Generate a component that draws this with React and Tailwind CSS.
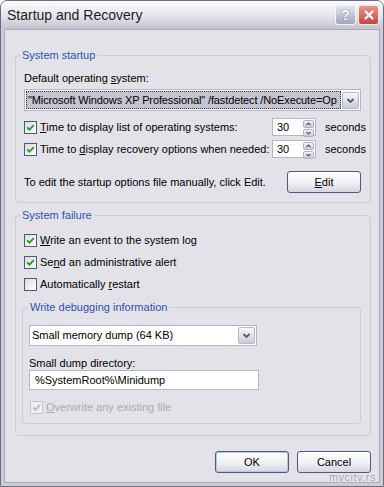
import React from 'react'

const CheckMark = ({ disabled }) => (
  <svg viewBox="0 0 11 11" className="h-[11px] w-[11px]">
    <path d="M2.2 5.4l2.3 2.3 4.3-4.6" fill="none" stroke={disabled ? '#b9b9c4' : '#21a121'} strokeWidth="1.9" />
  </svg>
)

const CheckBox = ({ checked, disabled }) => (
  <span
    className={`flex h-[13px] w-[13px] shrink-0 items-center justify-center border ${
      disabled ? 'border-[#c6c6ce] bg-[#efeff2]' : 'border-[#4b5b7c] bg-linear-to-br from-[#dcdcd7] to-white'
    }`}
  >
    {checked && <CheckMark disabled={disabled} />}
  </span>
)

const Chevron = ({ up, className = '' }) => (
  <svg viewBox="0 0 9 9" className={className}>
    <path d={up ? 'M1.5 6L4.5 3l3 3' : 'M1.5 3l3 3 3-3'} fill="none" stroke="#4d5a78" strokeWidth="1.8" />
  </svg>
)

const DropButton = () => (
  <span className="flex h-[17px] w-[17px] shrink-0 items-center justify-center rounded-[2px] border border-[#b6b8c8] bg-linear-to-b from-[#f7f7fa] to-[#cbcbd8]">
    <Chevron className="h-[9px] w-[9px]" />
  </span>
)

const Spin = ({ value }) => (
  <div className="flex h-[18px] w-[44px] shrink-0 items-center border border-[#b2b6c6] bg-white">
    <span className="flex-1 pl-[4px]">{value}</span>
    <div className="flex h-full w-[12px] flex-col gap-px py-px pr-px">
      <span className="flex flex-1 items-center justify-center rounded-[2px] border border-[#b0b3c4] bg-linear-to-b from-[#f4f4f8] to-[#c8c8d6]">
        <Chevron up className="h-[6px] w-[7px]" />
      </span>
      <span className="flex flex-1 items-center justify-center rounded-[2px] border border-[#b0b3c4] bg-linear-to-b from-[#f4f4f8] to-[#c8c8d6]">
        <Chevron className="h-[6px] w-[7px]" />
      </span>
    </div>
  </div>
)

const Button = ({ children, isDefault }) => (
  <div
    className={`flex h-[22px] w-[74px] shrink-0 items-center justify-center rounded-[3px] border border-[#4f5a76] bg-linear-to-b from-white via-[#f2f2f6] to-[#d5d5e0] ${
      isDefault ? 'shadow-[inset_0_0_0_1px_#b4c8ec]' : ''
    }`}
  >
    {children}
  </div>
)

const GroupBox = ({ title, legendOffset, className = '', children }) => (
  <fieldset className={`min-w-0 rounded-[4px] border border-[#cbcbd2] p-0 ${className}`}>
    <legend className={`${legendOffset} px-[2px] leading-[13px] text-[#2f50b4]`}>{title}</legend>
    {children}
  </fieldset>
)

export default function App() {
  return (
    <div className="relative h-[487px] w-[384px] bg-white font-['Liberation_Sans',Arial,sans-serif] text-[11px] leading-[13px] text-black">
      <div className="flex h-full flex-col overflow-hidden rounded-t-[7px] border border-[#6b6b84] bg-[#cdcdd9]">
        {/* Title bar */}
        <div className="flex h-[28px] shrink-0 items-center bg-linear-to-b from-[#fbfbfd] via-[#e6e6ec] to-[#c4c4d1] pl-[6px] pr-[4px]">
          <span className="flex-1 text-[14px] leading-[16px] text-[#1c1c24]">Startup and Recovery</span>
          <div className="flex gap-[2px]">
            <span className="flex h-[20px] w-[21px] items-center justify-center rounded-[3px] border border-[#f4f4f8] bg-linear-to-b from-[#e4e6f0] to-[#a2a6bc] text-[14px] font-bold text-white [text-shadow:0_0_1px_#40465c]">
              ?
            </span>
            <span className="flex h-[20px] w-[21px] items-center justify-center rounded-[3px] border border-[#f4e8e8] bg-linear-to-b from-[#e9958f] to-[#c0463e]">
              <svg viewBox="0 0 12 12" className="h-[12px] w-[12px]">
                <path d="M2 2l8 8M10 2l-8 8" stroke="white" strokeWidth="2.2" />
              </svg>
            </span>
          </div>
        </div>

        {/* Client area */}
        <div className="mx-[3px] mb-[3px] flex flex-1 flex-col border border-[#a9a9b9] bg-[#e3e2e8] pl-[10px] pr-[8px]">
          <GroupBox title="System startup" legendOffset="ml-[4px]" className="mt-[19px] w-[356px]">
            <div className="pl-[8px] pr-[9px] pt-[10px] pb-[9px]">
              <div>
                Default operating <span className="underline">s</span>ystem:
              </div>
              <div className="mt-[4px] flex h-[22px] items-center border border-[#b2b6c6] bg-white pl-px pr-px">
                <span className="mr-px flex h-[18px] min-w-0 flex-1 items-center overflow-hidden whitespace-nowrap border border-dotted border-[#333] bg-[#c4c4d2] pl-px tracking-[-0.12px]">
                  "Microsoft Windows XP Professional" /fastdetect /NoExecute=Op
                </span>
                <DropButton />
              </div>
              <div className="mt-[7px] flex h-[18px] items-center">
                <div className="flex w-[248px] shrink-0 items-center gap-[3px]">
                  <CheckBox checked />
                  <span>
                    <span className="underline">T</span>ime to display list of operating systems:
                  </span>
                </div>
                <Spin value="30" />
                <span className="ml-[9px]">seconds</span>
              </div>
              <div className="mt-[4px] flex h-[18px] items-center">
                <div className="flex w-[248px] shrink-0 items-center gap-[3px]">
                  <CheckBox checked />
                  <span>
                    Time to <span className="underline">d</span>isplay recovery options when needed:
                  </span>
                </div>
                <Spin value="30" />
                <span className="ml-[9px]">seconds</span>
              </div>
              <div className="mt-[13px] flex items-center justify-between">
                <span>To edit the startup options file manually, click Edit.</span>
                <Button>
                  <span className="underline">E</span>dit
                </Button>
              </div>
            </div>
          </GroupBox>

          <GroupBox title="System failure" legendOffset="ml-[4px]" className="mt-[6px] w-[356px]">
            <div className="pl-[6px] pr-[8px] pt-[12px] pb-[11px]">
              <div className="flex flex-col gap-[9px] pl-[2px]">
                <div className="flex h-[13px] items-center gap-[3px]">
                  <CheckBox checked />
                  <span>
                    <span className="underline">W</span>rite an event to the system log
                  </span>
                </div>
                <div className="flex h-[13px] items-center gap-[3px]">
                  <CheckBox checked />
                  <span>
                    Se<span className="underline">n</span>d an administrative alert
                  </span>
                </div>
                <div className="flex h-[13px] items-center gap-[3px]">
                  <CheckBox />
                  <span>
                    Automatically <span className="underline">r</span>estart
                  </span>
                </div>
              </div>

              <GroupBox title="Write debugging information" legendOffset="ml-[5px]" className="mt-[10px] w-[339px]">
                <div className="pl-[6px] pt-[11px] pb-[9px]">
                  <div className="flex h-[21px] w-[228px] items-center border border-[#b2b6c6] bg-white pl-[2px] pr-px">
                    <span className="flex-1">Small memory dump (64 KB)</span>
                    <DropButton />
                  </div>
                  <div className="mt-[11px]">Small dump directory:</div>
                  <div className="flex h-[20px] w-[230px] items-center border border-[#b2b6c6] bg-white pl-[5px]">
                    %SystemRoot%\Minidump
                  </div>
                  <div className="ml-px mt-[11px] flex h-[13px] items-center gap-[3px] text-[#a9a9b3]">
                    <CheckBox checked disabled />
                    <span>
                      <span className="underline">O</span>verwrite any existing file
                    </span>
                  </div>
                </div>
              </GroupBox>
            </div>
          </GroupBox>

          <div className="mt-[15px] flex justify-end gap-[8px]">
            <Button isDefault>OK</Button>
            <Button>Cancel</Button>
          </div>
        </div>
      </div>
      <span className="absolute bottom-[3px] right-[8px] text-[11px] tracking-[0.5px] text-[#9a9aa8] [text-shadow:0_0_1px_#fff,0_0_1px_#fff]">
        mycity.rs
      </span>
    </div>
  )
}
